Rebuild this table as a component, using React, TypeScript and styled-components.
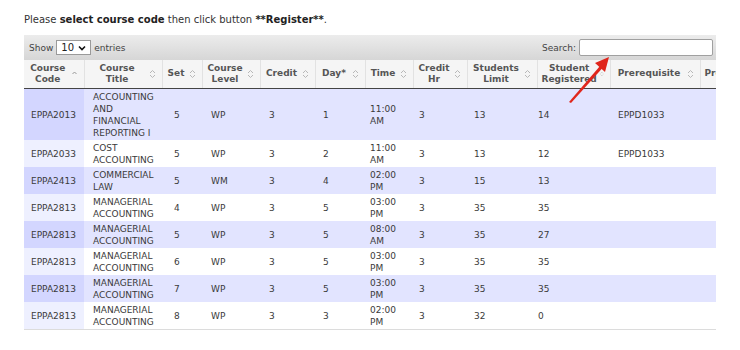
import React from 'react'
import styled, { createGlobalStyle } from 'styled-components'

const GlobalStyle = createGlobalStyle`
  html, body {
    margin: 0;
    padding: 0;
    background: #ffffff;
  }
  body {
    font-family: "DejaVu Sans", Verdana, sans-serif;
    font-size: 9px;
    color: #333;
  }
`

type Course = {
  code: string
  title: string[]
  set: number
  level: string
  credit: number
  day: number
  time: string[]
  creditHr: number
  limit: number
  registered: number
  prereq: string
}

const courses: Course[] = [
  { code: 'EPPA2013', title: ['ACCOUNTING', 'AND', 'FINANCIAL', 'REPORTING I'], set: 5, level: 'WP', credit: 3, day: 1, time: ['11:00', 'AM'], creditHr: 3, limit: 13, registered: 14, prereq: 'EPPD1033' },
  { code: 'EPPA2033', title: ['COST', 'ACCOUNTING'], set: 5, level: 'WP', credit: 3, day: 2, time: ['11:00', 'AM'], creditHr: 3, limit: 13, registered: 12, prereq: 'EPPD1033' },
  { code: 'EPPA2413', title: ['COMMERCIAL', 'LAW'], set: 5, level: 'WM', credit: 3, day: 4, time: ['02:00', 'PM'], creditHr: 3, limit: 15, registered: 13, prereq: '' },
  { code: 'EPPA2813', title: ['MANAGERIAL', 'ACCOUNTING'], set: 4, level: 'WP', credit: 3, day: 5, time: ['03:00', 'PM'], creditHr: 3, limit: 35, registered: 35, prereq: '' },
  { code: 'EPPA2813', title: ['MANAGERIAL', 'ACCOUNTING'], set: 5, level: 'WP', credit: 3, day: 5, time: ['08:00', 'AM'], creditHr: 3, limit: 35, registered: 27, prereq: '' },
  { code: 'EPPA2813', title: ['MANAGERIAL', 'ACCOUNTING'], set: 6, level: 'WP', credit: 3, day: 5, time: ['03:00', 'PM'], creditHr: 3, limit: 35, registered: 35, prereq: '' },
  { code: 'EPPA2813', title: ['MANAGERIAL', 'ACCOUNTING'], set: 7, level: 'WP', credit: 3, day: 5, time: ['03:00', 'PM'], creditHr: 3, limit: 35, registered: 35, prereq: '' },
  { code: 'EPPA2813', title: ['MANAGERIAL', 'ACCOUNTING'], set: 8, level: 'WP', credit: 3, day: 3, time: ['02:00', 'PM'], creditHr: 3, limit: 32, registered: 0, prereq: '' },
]

// pad = left padding of body cells, tuned per column
const columns = [
  { label: ['Course', 'Code'], width: 60, pad: 7, sorted: true },
  { label: ['Course', 'Title'], width: 78, pad: 9 },
  { label: ['Set'], width: 40, pad: 12 },
  { label: ['Course', 'Level'], width: 58, pad: 9 },
  { label: ['Credit'], width: 55, pad: 9 },
  { label: ['Day*'], width: 50, pad: 8 },
  { label: ['Time'], width: 48, pad: 5 },
  { label: ['Credit', 'Hr'], width: 54, pad: 6 },
  { label: ['Students', 'Limit'], width: 70, pad: 7 },
  { label: ['Student', 'Registered'], width: 73, pad: 1 },
  { label: ['Prerequisite'], width: 90, pad: 8 },
  { label: ['Programme'], width: 64, pad: 8 },
]

const Page = styled.div`
  padding: 14px 0 0 24px;
  position: relative;
  width: 716px;
  box-sizing: border-box;
`

const Intro = styled.p`
  margin: 0 0 9px 0;
  font-size: 10px;
  line-height: 12px;
  color: #333;
  b { color: #222; }
`

const Wrapper = styled.div`
  width: 692px;
  overflow: hidden;
  border-bottom: 1px solid #dcdcdc;
`

const Toolbar = styled.div`
  height: 25px;
  display: flex;
  align-items: center;
  justify-content: space-between;
  padding: 0 3px 0 5px;
  background: linear-gradient(#ececec, #d6d6d6);
  color: #444;
`

const Group = styled.label`
  display: flex;
  align-items: center;
  gap: 3px;
`

const Select = styled.div`
  width: 35px;
  height: 15px;
  box-sizing: border-box;
  border: 1px solid #9a9a9a;
  background: #fff;
  display: flex;
  align-items: center;
  justify-content: space-between;
  padding: 0 4px 0 4px;
  font-size: 10px;
  color: #222;
`

const SearchBox = styled.div`
  width: 134px;
  height: 17px;
  box-sizing: border-box;
  border: 1px solid #a0a0a0;
  border-radius: 2px;
  background: #fff;
`

const Table = styled.table`
  border-collapse: collapse;
  table-layout: fixed;
  width: 740px;
`

const Th = styled.th`
  height: 28px;
  padding: 0 6px 0 4px;
  box-sizing: border-box;
  background: #f5f5f5;
  border-right: 1px solid #e2e2e2;
  border-bottom: 1px solid #444;
  color: #555;
  font-weight: bold;
  line-height: 11px;
  white-space: nowrap;
`

const ThInner = styled.div`
  display: flex;
  align-items: center;
  gap: 3px;
`

const ThLabel = styled.span`
  flex: 1;
  text-align: center;
`

const Tr = styled.tr<{ $odd: boolean }>`
  background: ${(p) => (p.$odd ? '#e2e4ff' : '#ffffff')};
`

const Td = styled.td<{ $odd: boolean; $pl: number; $sorted?: boolean }>`
  padding: 2px 4px 1px ${(p) => p.$pl}px;
  line-height: 12px;
  vertical-align: middle;
  color: #3a3a3a;
  white-space: nowrap;
  background: ${(p) => (p.$sorted ? (p.$odd ? '#d3d6ff' : '#eef0ff') : 'transparent')};
`

const Arrow = styled.svg`
  position: absolute;
  left: 560px;
  top: 50px;
`

const SortBoth = () => (
  <svg width="7" height="10" viewBox="0 0 7 10">
    <path d="M1 4 L3.5 1.5 L6 4" fill="none" stroke="#b8b8b8" strokeWidth="1" />
    <path d="M1 6 L3.5 8.5 L6 6" fill="none" stroke="#b8b8b8" strokeWidth="1" />
  </svg>
)

const SortAsc = () => (
  <svg width="7" height="10" viewBox="0 0 7 10">
    <path d="M1.5 5 L3.5 3 L5.5 5" fill="none" stroke="#999" strokeWidth="1" />
  </svg>
)

const Caret = () => (
  <svg width="8" height="6" viewBox="0 0 8 6">
    <path d="M1 1.5 L4 4.5 L7 1.5" fill="none" stroke="#111" strokeWidth="1.6" />
  </svg>
)

const Lines = ({ items }: { items: string[] }) => (
  <>
    {items.map((t, j) => (
      <div key={j}>{t}</div>
    ))}
  </>
)

const App = () => {
  return (
    <Page>
      <GlobalStyle />
      <Intro>
        Please <b>select course code</b> then click button <b>**Register**</b>.
      </Intro>
      <Wrapper>
        <Toolbar>
          <Group>
            Show
            <Select>
              <span>10</span>
              <Caret />
            </Select>
            entries
          </Group>
          <Group>
            Search:
            <SearchBox />
          </Group>
        </Toolbar>
        <Table>
          <colgroup>
            {columns.map((c, i) => (
              <col key={i} style={{ width: c.width }} />
            ))}
          </colgroup>
          <thead>
            <tr>
              {columns.map((c, i) => (
                <Th key={i}>
                  <ThInner>
                    <ThLabel>
                      <Lines items={c.label} />
                    </ThLabel>
                    {c.sorted ? <SortAsc /> : <SortBoth />}
                  </ThInner>
                </Th>
              ))}
            </tr>
          </thead>
          <tbody>
            {courses.map((c, i) => {
              const odd = i % 2 === 0
              const cells: React.ReactNode[] = [
                c.code,
                <Lines items={c.title} />,
                c.set,
                c.level,
                c.credit,
                c.day,
                <Lines items={c.time} />,
                c.creditHr,
                c.limit,
                c.registered,
                c.prereq,
                '',
              ]
              return (
                <Tr key={i} $odd={odd}>
                  {cells.map((cell, k) => (
                    <Td key={k} $odd={odd} $pl={columns[k].pad} $sorted={k === 0}>
                      {cell}
                    </Td>
                  ))}
                </Tr>
              )
            })}
          </tbody>
        </Table>
      </Wrapper>
      <Arrow width="60" height="60" viewBox="0 0 60 60">
        <path d="M9 52 L40 16 L42.5 18 L11 53 Z" fill="#e0261c" />
        <path d="M49 7 L35 13 L45 22 Z" fill="#e0261c" />
      </Arrow>
    </Page>
  )
}

export default App
